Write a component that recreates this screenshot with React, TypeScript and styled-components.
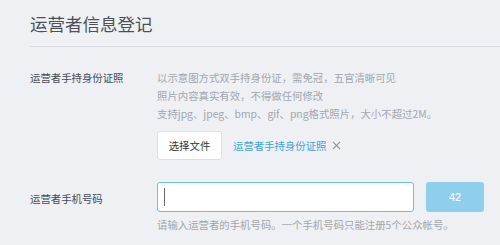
import styled, { createGlobalStyle } from "styled-components";

const GlobalStyle = createGlobalStyle`
  html, body {
    margin: 0;
    padding: 0;
    background: #eef0f4;
  }
  body {
    font-family: "Noto Sans CJK SC", "Noto Sans", sans-serif;
  }
  * {
    box-sizing: border-box;
  }
`;

export default function App() {
  return (
    <>
      <GlobalStyle />
      <Page>
        <Header>
          <Title>运营者信息登记</Title>
        </Header>

        <Row>
          <Label>运营者手持身份证照</Label>
          <Field>
            <Tips>
              <TipLine>以示意图方式双手持身份证，需免冠，五官清晰可见</TipLine>
              <TipLine>照片内容真实有效，不得做任何修改</TipLine>
              <TipLine>支持jpg、jpeg、bmp、gif、png格式照片，大小不超过2M。</TipLine>
            </Tips>
            <UploadRow>
              <FileButton>选择文件</FileButton>
              <FileName>运营者手持身份证照</FileName>
              <RemoveIcon viewBox="0 0 10 10">
                <path d="M1 1 L9 9 M9 1 L1 9" />
              </RemoveIcon>
            </UploadRow>
          </Field>
        </Row>

        <PhoneRow>
          <Label $center>运营者手机号码</Label>
          <Field>
            <InputRow>
              <PhoneInput>
                <Caret />
              </PhoneInput>
              <CodeButton>42</CodeButton>
            </InputRow>
            <Hint>请输入运营者的手机号码。一个手机号码只能注册5个公众帐号。</Hint>
          </Field>
        </PhoneRow>
      </Page>
    </>
  );
}

const Page = styled.div`
  padding-left: 30px;
  width: 500px;
  height: 245px;
  overflow: hidden;
`;

const Header = styled.div`
  height: 47px;
  border-bottom: 1px solid #d8dce2;
  display: flex;
  align-items: center;
`;

const Title = styled.h1`
  margin: 0;
  font-size: 17.5px;
  font-weight: normal;
  color: #4a5058;
  line-height: 20px;
  padding-top: 1px;
`;

const Row = styled.div`
  display: grid;
  grid-template-columns: 127px 1fr;
  margin-top: 22px;
`;

const PhoneRow = styled(Row)`
  margin-top: 22px;
`;

const Label = styled.div<{ $center?: boolean }>`
  font-size: 10.4px;
  color: #454a51;
  line-height: 18px;
  padding-top: ${(p) => (p.$center ? "8px" : "0")};
`;

const Field = styled.div`
  display: flex;
  flex-direction: column;
`;

const Tips = styled.div`
  font-size: 10.4px;
  color: #a2a7ae;
  line-height: 18px;
`;

const TipLine = styled.div``;

const UploadRow = styled.div`
  display: flex;
  align-items: center;
  margin-top: 8px;
`;

const FileButton = styled.div`
  width: 65px;
  height: 29px;
  border: 1px solid #dcdfe4;
  border-radius: 3px;
  background: #fff;
  font-size: 10.4px;
  color: #333;
  display: flex;
  align-items: center;
  justify-content: center;
`;

const FileName = styled.span`
  margin-left: 11px;
  font-size: 10.4px;
  color: #3da5d9;
`;

const RemoveIcon = styled.svg`
  width: 9px;
  height: 9px;
  margin-left: 5px;
  stroke: #8d939a;
  stroke-width: 1.3;
  fill: none;
`;

const InputRow = styled.div`
  display: flex;
  gap: 12px;
`;

const PhoneInput = styled.div`
  width: 257px;
  height: 30px;
  border: 1.5px solid #6bbfe6;
  border-radius: 3px;
  background: #fff;
  display: flex;
  align-items: center;
  padding-left: 6px;
`;

const Caret = styled.div`
  width: 1px;
  height: 18px;
  background: #666;
`;

const CodeButton = styled.div`
  width: 58px;
  height: 30px;
  border-radius: 3px;
  background: #8ecfee;
  color: #fff;
  font-size: 11px;
  font-family: "Liberation Sans", Arial, sans-serif;
  display: flex;
  align-items: center;
  justify-content: center;
`;

const Hint = styled.div`
  margin-top: 4px;
  font-size: 10.4px;
  color: #a2a7ae;
  line-height: 18px;
`;
